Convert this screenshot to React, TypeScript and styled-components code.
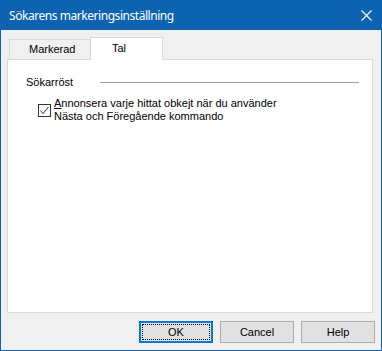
import React from "react";
import styled, { createGlobalStyle } from "styled-components";

const Global = createGlobalStyle`
  html, body { margin: 0; padding: 0; background: #ffffff; }
  * { box-sizing: border-box; }
`;

const Window = styled.div`
  width: 382px;
  height: 351px;
  border: 1px solid #0d63b0;
  display: flex;
  flex-direction: column;
  background: #f0f0f0;
  font-family: "Liberation Sans", Arial, sans-serif;
  font-size: 11px;
  color: #000;
`;

const TitleBar = styled.div`
  height: 29px;
  flex: none;
  background: #0d63b0;
  display: flex;
  align-items: center;
  justify-content: space-between;
  padding: 0 9px 1px 8px;
`;

const Title = styled.span`
  font-family: "Noto Sans", "Segoe UI", sans-serif;
  font-size: 12px;
  letter-spacing: -0.45px;
  color: #ffffff;
`;

const Content = styled.div`
  flex: 1;
  display: flex;
  flex-direction: column;
  padding: 7px 6px 7px 6px;
`;

const TabStrip = styled.div`
  display: flex;
  align-items: flex-end;
  height: 22px;
  padding-left: 2px;
`;

const Tab = styled.div<{ $active?: boolean; $width: number; $pad: number }>`
  position: relative;
  z-index: ${(p) => (p.$active ? 1 : 0)};
  width: ${(p) => p.$width}px;
  height: ${(p) => (p.$active ? 23 : 20)}px;
  margin-bottom: ${(p) => (p.$active ? -1 : 0)}px;
  margin-left: ${(p) => (p.$active ? -1 : 0)}px;
  background: ${(p) => (p.$active ? "#ffffff" : "#f0f0f0")};
  border: 1px solid #d9d9d9;
  border-bottom: none;
  padding-left: ${(p) => p.$pad}px;
  padding-top: ${(p) => (p.$active ? 4 : 3)}px;
  line-height: 13px;
  white-space: nowrap;
`;

const Panel = styled.div`
  height: 254px;
  margin-right: 2px;
  background: #ffffff;
  border: 1px solid #d9d9d9;
  padding: 16px 13px 0 18px;
  display: flex;
  flex-direction: column;
`;

const GroupHeader = styled.div`
  display: flex;
  align-items: center;
  height: 13px;
  line-height: 13px;
`;

const GroupLine = styled.div`
  flex: 1;
  height: 1px;
  background: #a0a0a0;
  margin-left: 27px;
`;

const CheckRow = styled.label`
  display: flex;
  align-items: center;
  gap: 3px;
  margin-top: 8px;
  margin-left: 12px;
`;

const Box = styled.span`
  width: 13px;
  height: 13px;
  flex: none;
  background: #ffffff;
  border: 1px solid #333333;
  display: flex;
  align-items: center;
  justify-content: center;
`;

const CheckText = styled.span`
  line-height: 13px;
`;

const Underline = styled.span`
  text-decoration: underline;
`;

const ButtonRow = styled.div`
  display: flex;
  justify-content: flex-end;
  gap: 7px;
  margin-top: 8px;
`;

const Button = styled.button<{ $default?: boolean }>`
  width: 74px;
  height: 22px;
  padding: 0;
  background: #e1e1e1;
  border: 1px solid ${(p) => (p.$default ? "#0078d7" : "#adadad")};
  box-shadow: ${(p) => (p.$default ? "inset 0 0 0 1px #0078d7" : "none")};
  outline: ${(p) => (p.$default ? "1px dotted #000" : "none")};
  outline-offset: -4px;
  font-family: "Liberation Sans", Arial, sans-serif;
  font-size: 11px;
  color: #000;
  line-height: 13px;
`;

export default function App() {
  return (
    <>
      <Global />
      <Window>
        <TitleBar>
          <Title>Sökarens markeringsinställning</Title>
          <svg width="11" height="11" viewBox="0 0 11 11">
            <path d="M0.5 0.5 L10.5 10.5 M10.5 0.5 L0.5 10.5" stroke="#ffffff" strokeWidth="1.1" fill="none" />
          </svg>
        </TitleBar>
        <Content>
          <TabStrip>
            <Tab $width={82} $pad={19}>Markerad</Tab>
            <Tab $active $width={73} $pad={21}>Tal</Tab>
          </TabStrip>
          <Panel>
            <GroupHeader>
              <span>Sökarröst</span>
              <GroupLine />
            </GroupHeader>
            <CheckRow>
              <Box>
                <svg width="11" height="11" viewBox="0 0 11 11">
                  <path d="M1.5 5.5 L4 8.5 L9.5 2" stroke="#555555" strokeWidth="1.1" fill="none" />
                </svg>
              </Box>
              <CheckText>
                <Underline>A</Underline>nnonsera varje hittat obkejt när du använder
                <br />
                Nästa och Föregående kommando
              </CheckText>
            </CheckRow>
          </Panel>
          <ButtonRow>
            <Button $default>OK</Button>
            <Button>Cancel</Button>
            <Button>Help</Button>
          </ButtonRow>
        </Content>
      </Window>
    </>
  );
}
